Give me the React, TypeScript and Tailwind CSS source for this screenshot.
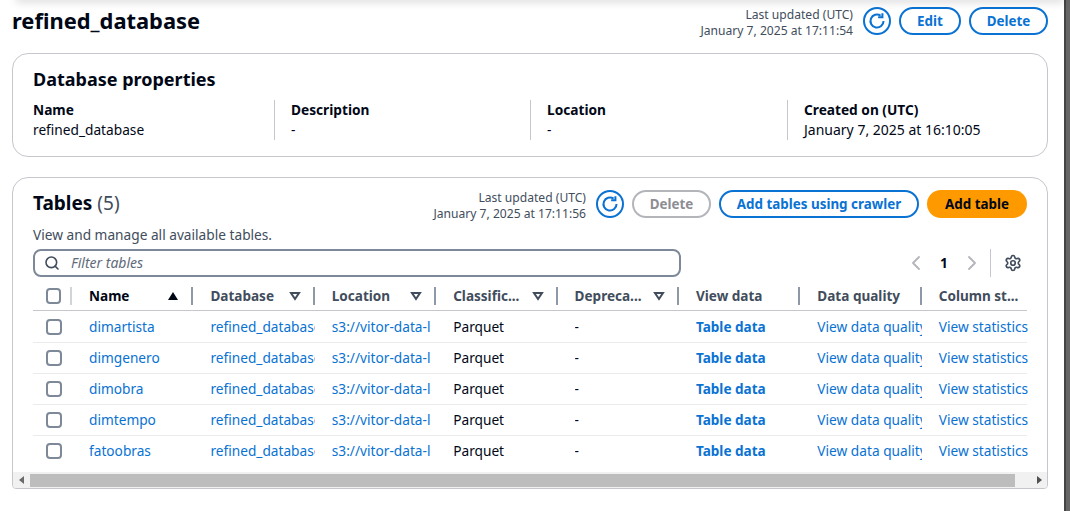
import React from 'react';
import { ChevronLeft, ChevronRight, Search, Settings } from 'lucide-react';

const tables = ['dimartista', 'dimgenero', 'dimobra', 'dimtempo', 'fatoobras'];

const Refresh: React.FC = () => (
  <button className="flex h-7 w-7 shrink-0 items-center justify-center rounded-full border-2 border-[#0972d3] text-[#0972d3]">
    <svg viewBox="0 0 16 16" className="h-[18px] w-[18px]" fill="none" stroke="currentColor" strokeWidth="1.8">
      <path d="M13.8 8A5.8 5.8 0 1 1 11.2 3.2" />
      <path d="M12.8 1v3.6H9" />
    </svg>
  </button>
);

const Updated: React.FC<{ time: string }> = ({ time }) => (
  <div className="mr-[2px] text-right text-[12.1px] leading-4 text-[#414d5c]">
    <div>Last updated (UTC)</div>
    <div>January 7, 2025 at {time}</div>
  </div>
);

const OutlineButton: React.FC<{ label: string; className: string }> = ({ label, className }) => (
  <button className={`flex h-7 items-center justify-center rounded-full border-2 border-[#0972d3] text-[13.4px] font-bold text-[#0972d3] ${className}`}>
    {label}
  </button>
);

const Prop: React.FC<{ label: string; value: string; className: string; valueClass?: string }> = ({ label, value, className, valueClass }) => (
  <div className={className}>
    <div className="font-bold text-[#000716]">{label}</div>
    <div className={`text-[#000716] ${valueClass ?? ''}`}>{value}</div>
  </div>
);

const Divider: React.FC<{ light?: boolean }> = ({ light }) => (
  <span className={`block h-[18px] w-[2px] shrink-0 ${light ? 'bg-[#d1d5db]' : 'bg-[#8d99a8]'}`} />
);

const Checkbox: React.FC = () => <span className="block h-4 w-4 rounded-[4px] border-2 border-[#7d8998] bg-white" />;

const SortDown: React.FC = () => (
  <svg viewBox="0 0 12 10" className="h-[10px] w-3 text-[#414d5c]" fill="none" stroke="currentColor" strokeWidth="2">
    <path d="M2 2h8L6 8z" />
  </svg>
);

const HeaderCell: React.FC<{ label: string; sort?: boolean }> = ({ label, sort }) => (
  <div className="flex w-[121.4px] shrink-0 items-center pl-[17px]">
    <span className="text-[13.55px] font-bold text-[#414d5c]">{label}</span>
    <span className="ml-auto flex items-center gap-3">
      {sort && <SortDown />}
      <Divider />
    </span>
  </div>
);

const Clip: React.FC<{ children: React.ReactNode; className?: string }> = ({ children, className }) => (
  <div className={`w-[121.4px] shrink-0 whitespace-nowrap pl-[17px] ${className ?? ''}`}>
    <div className="w-[104.4px] overflow-hidden">{children}</div>
  </div>
);

export default function App() {
  return (
    <div className="flex h-[511px] w-[1070px] justify-between overflow-hidden bg-white font-['Noto_Sans',sans-serif] text-[13.7px] leading-5 text-[#000716]">
      <div className="relative w-[1064px] shrink-0">
        <div className="absolute -top-1 left-4 right-0 h-1 shadow-[0_1px_8px_rgba(0,7,22,0.25)]" />
        <div className="flex h-[53px] items-start justify-between pl-3 pr-4 pt-[7px]">
          <h1 className="text-[21.9px] font-bold leading-[28px] text-[#000716]">refined_database</h1>
          <div className="flex items-start gap-[8px]">
            <Updated time="17:11:54" />
            <Refresh />
            <OutlineButton label="Edit" className="w-[62px]" />
            <OutlineButton label="Delete" className="w-[79px]" />
          </div>
        </div>

        <section className="ml-3 h-[104px] w-[1036px] rounded-2xl border border-[#c6c6cd] px-5 pt-[14px]">
          <h2 className="text-[18px] font-bold leading-[22px]">Database properties</h2>
          <div className="mt-[10px] flex">
            <Prop label="Name" value="refined_database" className="w-[242px] border-r border-[#c6c6cd]" />
            <Prop label="Description" value="-" className="w-[256px] border-r border-[#c6c6cd] pl-4" />
            <Prop label="Location" value="-" className="w-[257px] border-r border-[#c6c6cd] pl-4" />
            <Prop label="Created on (UTC)" value="January 7, 2025 at 16:10:05" valueClass="text-[14px]" className="pl-4" />
          </div>
        </section>

        <section className="ml-3 mt-5 flex h-[312px] w-[1036px] flex-col overflow-hidden rounded-t-2xl rounded-b-sm border border-[#c6c6cd]">
          <div className="flex items-start justify-between px-5 pt-3">
            <h2 className="text-[19px] font-bold leading-[26px]">
              Tables <span className="font-normal text-[#414d5c]">(5)</span>
            </h2>
            <div className="flex items-start gap-[8px]">
              <Updated time="17:11:56" />
              <Refresh />
              <button className="flex h-7 w-[79px] items-center justify-center rounded-full border-2 border-[#b4b4bb] text-[13.4px] font-bold text-[#8d8d94]">
                Delete
              </button>
              <OutlineButton label="Add tables using crawler" className="w-[200px]" />
              <button className="flex h-7 w-[100px] items-center justify-center rounded-full bg-[#ff9900] text-[13.4px] font-bold text-[#000716]">
                Add table
              </button>
            </div>
          </div>
          <p className="mt-[3px] px-5 text-[#414d5c]">View and manage all available tables.</p>
          <div className="mt-1 flex items-center px-5">
            <div className="flex h-7 w-[648px] items-center rounded-lg border-2 border-[#7d8998] pl-[9px]">
              <Search size={16} strokeWidth={2.4} className="text-[#414d5c]" />
              <span className="ml-[11px] text-[14px] italic text-[#5f6b7a]">Filter tables</span>
            </div>
            <div className="ml-auto flex items-center">
              <ChevronLeft size={24} strokeWidth={1.8} className="text-[#b4b4bb]" />
              <span className="mx-3 w-2 text-center font-bold">1</span>
              <ChevronRight size={24} strokeWidth={1.8} className="text-[#b4b4bb]" />
              <span className="ml-[6px] mr-[13px] h-7 w-px bg-[#c6c6cd]" />
              <Settings size={18} strokeWidth={2.2} className="mr-[5px] text-[#414d5c]" />
            </div>
          </div>

          <div className="mx-5 mt-[5px]">
            <div className="flex h-[29px] items-center border-b border-[#c6c6cd]">
              <div className="flex w-[39px] shrink-0 items-center pl-[13px]">
                <Checkbox />
                <span className="ml-[9px]"><Divider light /></span>
              </div>
              <div className="flex w-[121.4px] shrink-0 items-center pl-[17px]">
                <span className="text-[13.55px] font-bold text-[#000716]">Name</span>
                <span className="ml-auto flex items-center gap-3">
                  <svg viewBox="0 0 12 10" className="h-[10px] w-3 text-[#000716]" fill="currentColor">
                    <path d="M6 1l5 8H1z" />
                  </svg>
                  <Divider />
                </span>
              </div>
              <HeaderCell label="Database" sort />
              <HeaderCell label="Location" sort />
              <HeaderCell label="Classific..." sort />
              <HeaderCell label="Depreca..." sort />
              <HeaderCell label="View data" />
              <HeaderCell label="Data quality" />
              <div className="pl-[17px] text-[13.55px] font-bold text-[#414d5c]">Column st...</div>
            </div>
            <div className="mt-px">
              {tables.map((name, i) => (
                <div key={name} className={`flex h-[31px] items-center border-b ${i < 4 ? 'border-[#e9ebed]' : 'border-transparent'}`}>
                  <div className="flex w-[39px] shrink-0 items-center pl-[13px]">
                    <Checkbox />
                  </div>
                  <Clip className="text-[#0972d3]">{name}</Clip>
                  <Clip className="text-[#0972d3]">refined_database</Clip>
                  <Clip className="text-[#0972d3]">s3://vitor-data-l</Clip>
                  <Clip>Parquet</Clip>
                  <Clip>-</Clip>
                  <Clip className="text-[13.55px] font-bold text-[#0972d3]">Table data</Clip>
                  <Clip className="text-[#0972d3]">View data quality</Clip>
                  <div className="whitespace-nowrap pl-[17px] text-[#0972d3]">View statistics</div>
                </div>
              ))}
            </div>
          </div>

          <div className="mt-auto flex h-4 shrink-0 items-center bg-[#f1f1f1]">
            <svg viewBox="0 0 6 8" className="ml-[6px] h-2 w-[6px] shrink-0 text-[#6b6b6b]" fill="currentColor">
              <path d="M5 0v8L0 4z" />
            </svg>
            <div className="ml-[5px] h-[13px] w-[985px] shrink-0 bg-[#bdbdbd]" />
            <svg viewBox="0 0 6 8" className="ml-auto mr-[4px] h-2 w-[6px] shrink-0 text-[#505050]" fill="currentColor">
              <path d="M0 0v8l5-4z" />
            </svg>
          </div>
        </section>
      </div>
      <div className="flex w-[6px] shrink-0">
        <div className="w-[2px] bg-[#444444]" />
        <div className="flex-1 bg-[#666666]" />
      </div>
    </div>
  );
}
